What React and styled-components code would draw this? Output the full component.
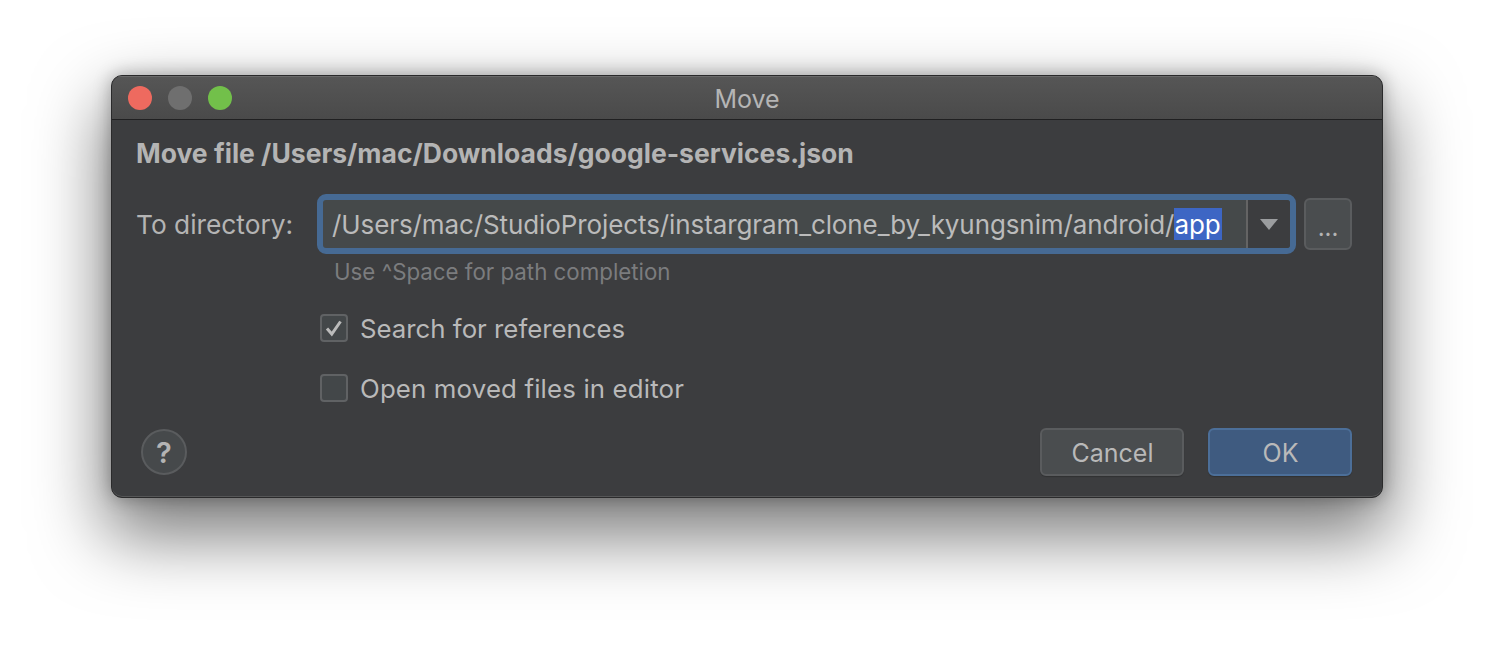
import { createGlobalStyle, styled } from 'styled-components';

const GlobalStyle = createGlobalStyle`
  html, body {
    margin: 0;
    background: #fff;
    font-family: "Inter", "Liberation Sans", sans-serif;
    overflow: hidden;
  }
`;

export default function App() {
  return (
    <Page>
      <GlobalStyle />
      <Window>
        <TitleBar>
          <Lights>
            <Light color="#ee6a5f" />
            <Light color="#6f6f6f" />
            <Light color="#72c04a" />
          </Lights>
          <WindowTitle>Move</WindowTitle>
        </TitleBar>
        <Content>
          <Heading>Move file /Users/mac/Downloads/google-services.json</Heading>
          <Form>
            <FieldLabel>To directory:</FieldLabel>
            <FieldRow>
              <Combo>
                <PathText>
                  /Users/mac/StudioProjects/instargram_clone_by_kyungsnim/android/<Selected>app</Selected>
                </PathText>
                <ArrowBox>
                  <svg width="18" height="11" viewBox="0 0 18 11">
                    <path d="M0 0H18L9 11Z" fill="#9b9d9f" />
                  </svg>
                </ArrowBox>
              </Combo>
              <BrowseButton>...</BrowseButton>
            </FieldRow>
            <Hint>Use ^Space for path completion</Hint>
            <Options>
              <Option>
                <CheckBox>
                  <svg width="20" height="20" viewBox="0 0 20 20">
                    <path d="M3 10.5L7.8 16L16.5 3.5" fill="none" stroke="#bbbbbb" strokeWidth="3" />
                  </svg>
                </CheckBox>
                Search for references
              </Option>
              <Option spaced>
                <CheckBox />
                Open moved files in editor
              </Option>
            </Options>
          </Form>
          <Footer>
            <HelpButton>?</HelpButton>
            <Actions>
              <ActionButton>Cancel</ActionButton>
              <ActionButton primary>OK</ActionButton>
            </Actions>
          </Footer>
        </Content>
      </Window>
    </Page>
  );
}

const Page = styled.div`
  width: 1494px;
  height: 646px;
  padding: 75px 0 0 111px;
  box-sizing: border-box;
`;

const Window = styled.div`
  width: 1272px;
  height: 423px;
  box-sizing: border-box;
  display: flex;
  flex-direction: column;
  background: #3c3d3f;
  border: 1px solid #2a2a2b;
  border-radius: 11px;
  overflow: hidden;
  box-shadow: 0 32px 70px 6px rgba(0, 0, 0, 0.52), 0 0 18px rgba(0, 0, 0, 0.3), inset 0 -1px 0 #555657;
  color: #b9b9b9;
`;

const TitleBar = styled.div`
  height: 43px;
  flex-shrink: 0;
  position: relative;
  display: flex;
  align-items: center;
  justify-content: center;
  background: linear-gradient(#565656, #4a4a4a);
  border-bottom: 1px solid #202021;
  box-shadow: inset 0 1px 0 #6a6a6a;
`;

const Lights = styled.div`
  position: absolute;
  left: 16px;
  top: 10px;
  display: flex;
  gap: 16px;
`;

const Light = styled.span`
  width: 24px;
  height: 24px;
  border-radius: 50%;
  background: ${({ color }) => color};
`;

const WindowTitle = styled.div`
  padding-top: 2px;
  font-size: 25px;
  color: #b5b5b5;
`;

const Content = styled.div`
  flex: 1;
  display: flex;
  flex-direction: column;
  padding: 17px 30px 0 24px;
`;

const Heading = styled.div`
  font-size: 26.5px;
  line-height: 32px;
  font-weight: 700;
  color: #b4b4b4;
`;

const Form = styled.div`
  display: grid;
  grid-template-columns: 184px 1fr;
  margin-top: 25px;
`;

const FieldLabel = styled.div`
  padding-top: 2px;
  font-size: 26.3px;
  line-height: 58px;
  color: #b4b4b4;
`;

const FieldRow = styled.div`
  display: flex;
  align-items: center;
  gap: 8px;
  margin-left: -3px;
`;

const Combo = styled.div`
  flex: 1;
  height: 60px;
  box-sizing: border-box;
  display: flex;
  border: 6px solid #466a94;
  border-radius: 9px;
  background: #45494a;
  font-size: 26px;
  letter-spacing: -0.1px;
  color: #bbbbbb;
`;

const PathText = styled.div`
  flex: 1;
  padding: 1px 0 0 9px;
  line-height: 47px;
  white-space: nowrap;
`;

const Selected = styled.span`
  display: inline-block;
  width: 48px;
  height: 32px;
  line-height: 34px;
  background: #3d66c4;
  color: #fff;
`;

const ArrowBox = styled.div`
  width: 42px;
  display: flex;
  align-items: center;
  justify-content: center;
  background: #3c3d3f;
  border-left: 2px solid #646464;
  border-radius: 0 3px 3px 0;
`;

const BrowseButton = styled.div`
  width: 48px;
  height: 52px;
  box-sizing: border-box;
  display: flex;
  align-items: center;
  justify-content: center;
  padding-top: 6px;
  border: 2px solid #5a5c5e;
  border-radius: 6px;
  background: #4a4d4f;
  font-size: 24px;
  color: #b4b4b4;
`;

const Hint = styled.div`
  grid-column: 2;
  padding-left: 14px;
  margin-top: 3px;
  font-size: 22.3px;
  line-height: 30px;
  color: #7b7c7e;
`;

const Options = styled.div`
  grid-column: 2;
  display: flex;
  flex-direction: column;
  gap: 32px;
  margin-top: 27px;
`;

const Option = styled.div`
  display: flex;
  align-items: center;
  gap: 12px;
  height: 28px;
  font-size: 25.8px;
  letter-spacing: ${({ spaced }) => (spaced ? '0.16px' : '0')};
  color: #b9b9b9;
`;

const CheckBox = styled.span`
  width: 28px;
  height: 28px;
  box-sizing: border-box;
  display: flex;
  align-items: center;
  justify-content: center;
  border: 2px solid #606264;
  border-radius: 4px;
  background: #434749;
`;

const Footer = styled.div`
  display: flex;
  align-items: center;
  justify-content: space-between;
  margin-top: 26px;
  padding-left: 5px;
`;

const HelpButton = styled.div`
  width: 46px;
  height: 46px;
  box-sizing: border-box;
  display: flex;
  align-items: center;
  justify-content: center;
  border: 2px solid #5a5c5e;
  border-radius: 50%;
  background: #46494b;
  font-size: 29px;
  font-weight: 600;
  color: #b4b4b4;
`;

const Actions = styled.div`
  display: flex;
  gap: 24px;
`;

const ActionButton = styled.div`
  width: 144px;
  height: 48px;
  box-sizing: border-box;
  display: flex;
  align-items: center;
  justify-content: center;
  padding: 2px 0 0 1px;
  border: 2px solid ${({ primary }) => (primary ? '#4c6f99' : '#5a5c5e')};
  border-radius: 6px;
  background: ${({ primary }) => (primary ? '#3f5b80' : '#4a4d4f')};
  box-shadow: 0 1px 1px rgba(0, 0, 0, 0.2);
  font-size: 25px;
  color: #b9b9b9;
`;
